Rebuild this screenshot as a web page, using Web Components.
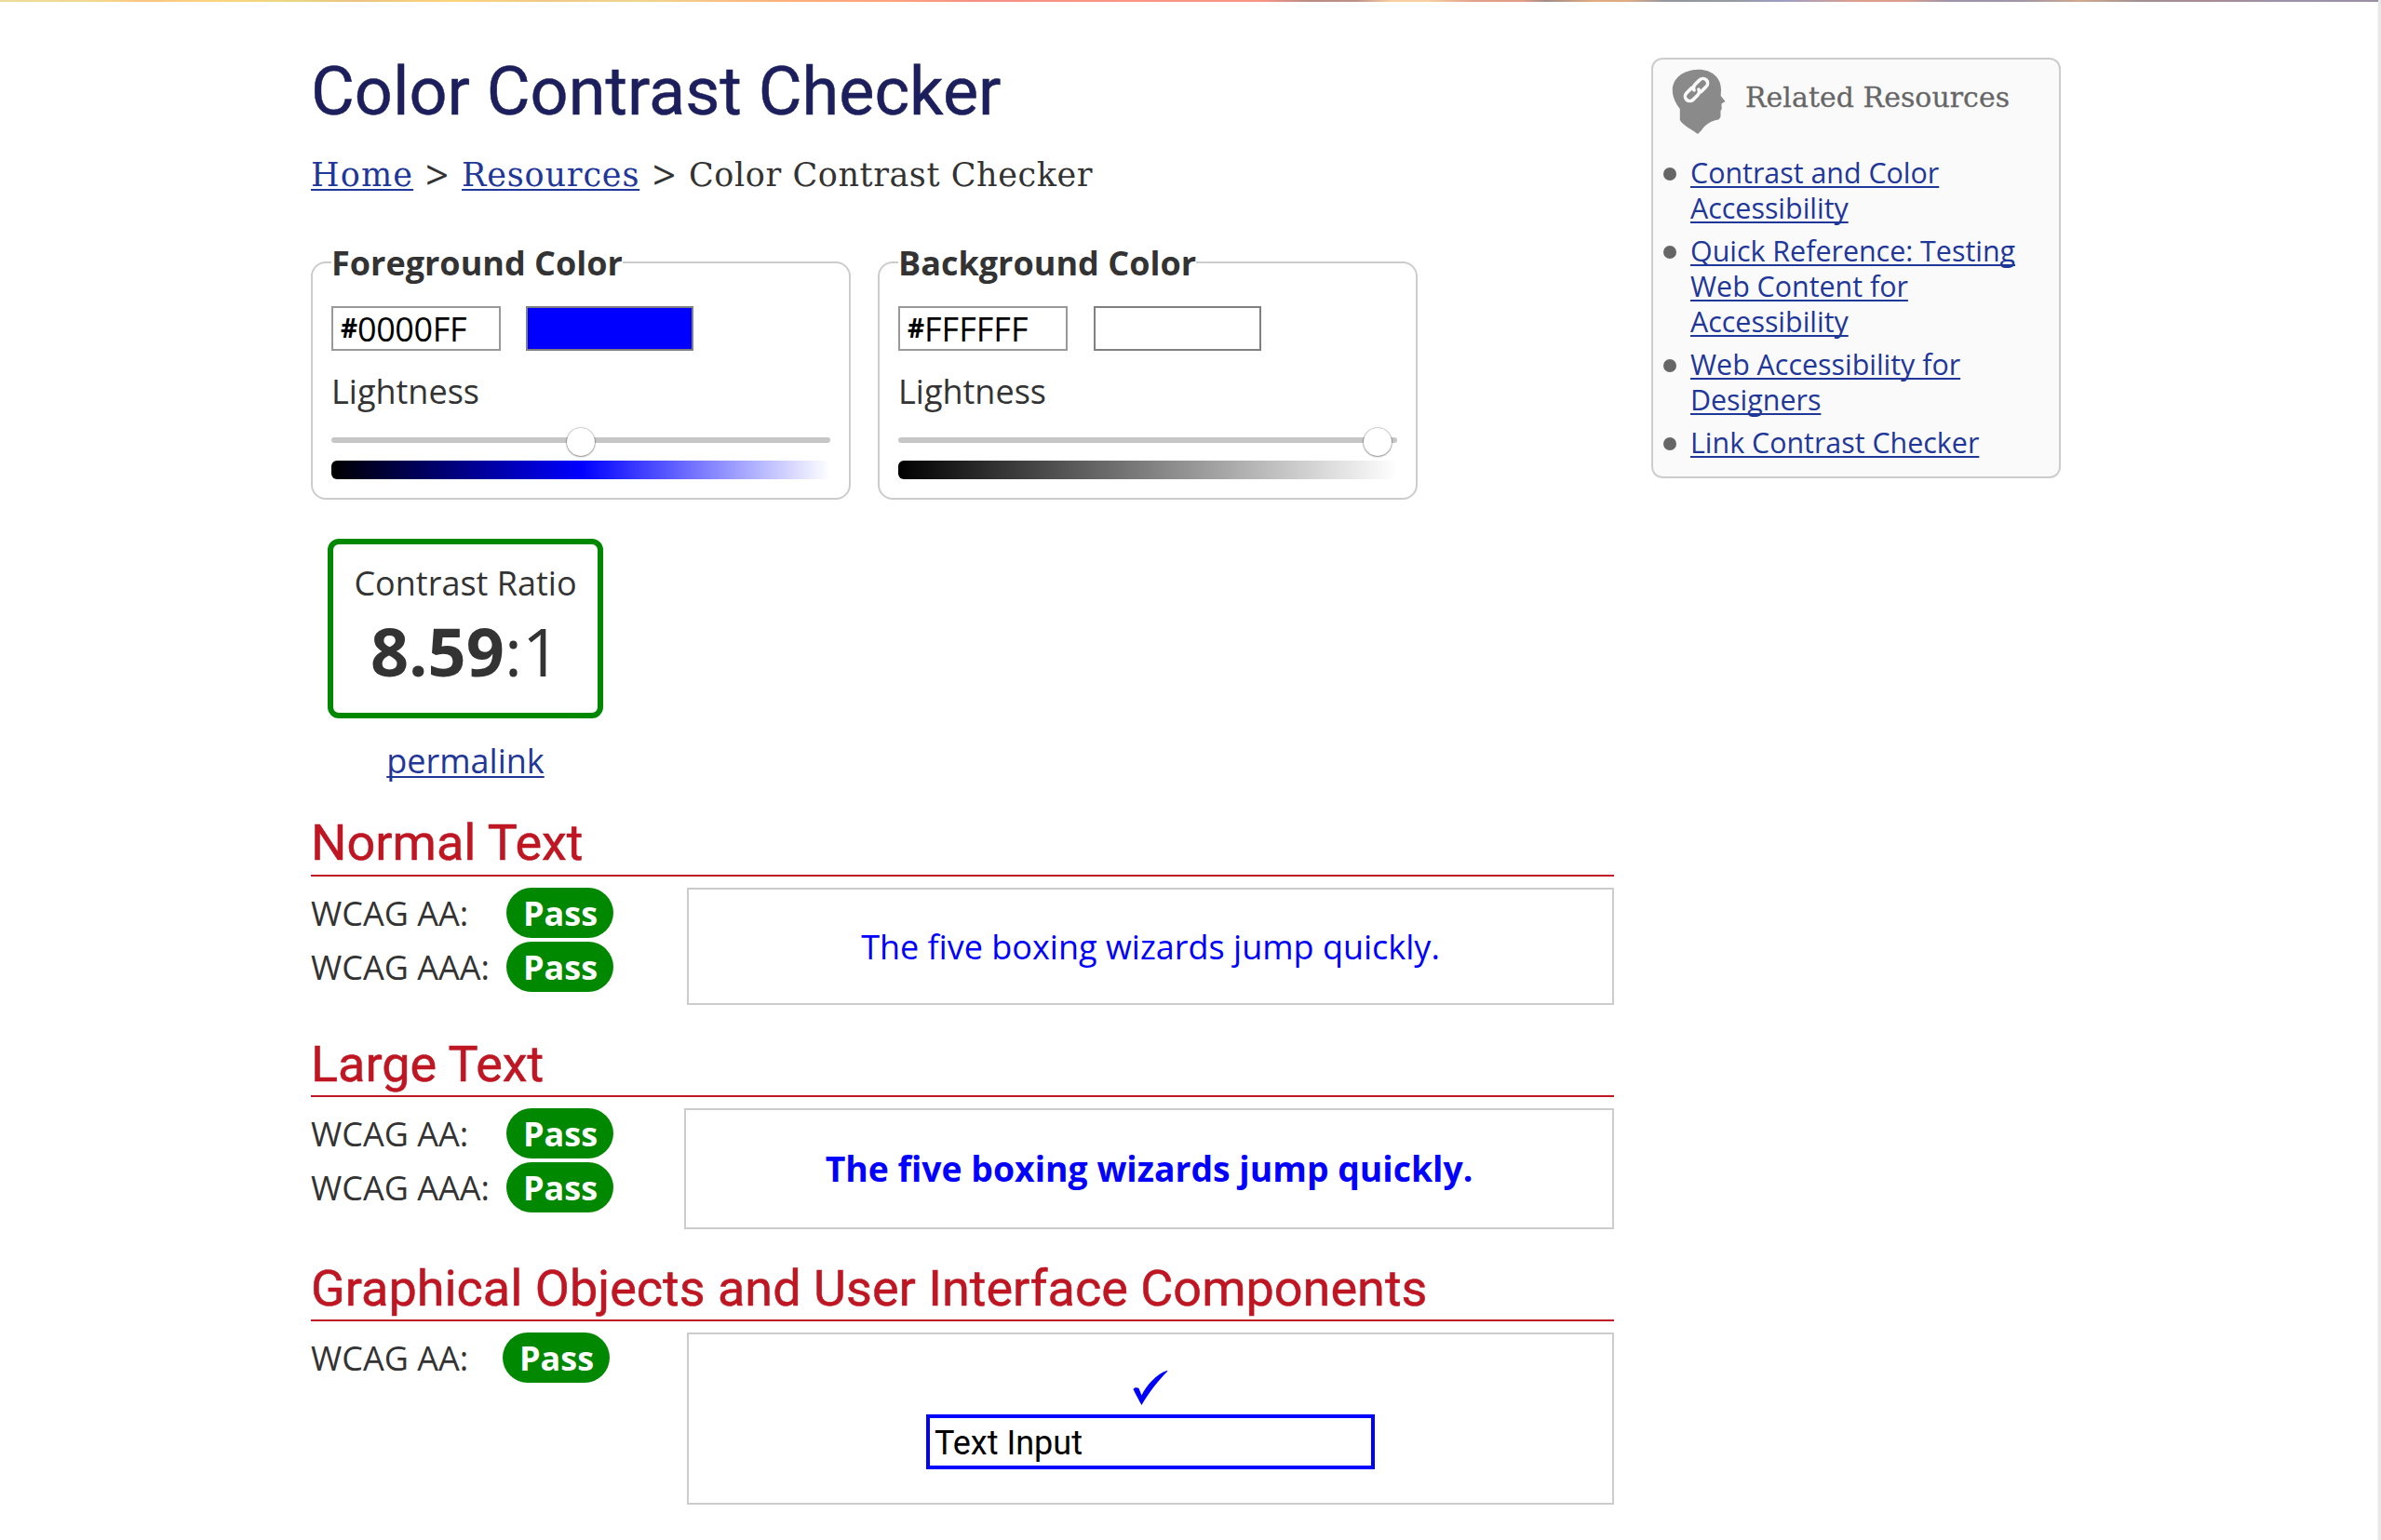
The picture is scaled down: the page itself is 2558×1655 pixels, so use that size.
<!DOCTYPE html>
<html lang="en"><head><meta charset="utf-8"><title>Color Contrast Checker</title>
<style>
html,body{margin:0;padding:0;background:#fff}
body{width:2558px;height:1655px;overflow:hidden;font:36px/58px "Open Sans",sans-serif;color:#333}
</style></head><body>
<checker-page></checker-page>
<script>
const define=(name,html)=>customElements.define(name,class extends HTMLElement{
  constructor(){super();this.attachShadow({mode:'open'})}
  connectedCallback(){this.shadowRoot.innerHTML=typeof html==='function'?html(this):html}
});

define('photo-strip',`<style>:host{display:block;height:2px;background:linear-gradient(90deg,#eedb9b 0,#f3d98f 4%,#fdc583 6%,#fdd57c 9%,#ead580 12.5%,#ebc382 15%,#fdd57a 19%,#f0c888 23%,#f0d68c 27%,#feb07a 33%,#fd9f80 38%,#f49084 41%,#fb9484 46%,#f99382 53%,#b98d86 55%,#bd9088 57%,#f8d0a0 58.5%,#f8cfa2 60%,#e0a08a 62%,#e39c85 64%,#a28c88 65%,#e0ac80 67%,#deaa84 68.5%,#93959f 70%,#959aa0 73%,#9d9dc8 75%,#dc9f8c 78%,#dc9f8c 80%,#9c93aa 82%,#a096a6 85%,#d0a88c 87.5%,#a19093 90%,#a88a92 93%,#9b93ab 96%,#9c90a4 99.7%)}</style>`);

define('text-link',`<style>:host{display:inline}a{color:#1f3799;text-decoration:underline;text-decoration-thickness:2px;text-underline-offset:3px;text-decoration-skip-ink:none}</style><a><slot></slot></a>`);

define('crumb-trail',`<style>
:host{display:flex;align-items:center;height:48px;font:35px/48px "DejaVu Serif",serif;margin-top:23px;white-space:nowrap}
.h{width:109px;letter-spacing:1.15px}.r{width:191px;letter-spacing:.84px}.c{letter-spacing:.57px}
.s{width:53px;text-align:center;font:44px/48px "Open Sans",sans-serif;height:48px;margin-top:-2px}
</style><text-link class="h">Home</text-link><span class="s">&gt;</span><text-link class="r">Resources</text-link><span class="s">&gt;</span><span class="c">Color Contrast Checker</span>`);

define('color-panel',el=>`<style>
:host{display:block;box-sizing:border-box;width:580px}
fieldset{margin:0;padding:0 20px;border:2px solid #ccc;border-radius:16px;min-width:0;box-sizing:border-box;height:282px}
legend{font-weight:700;padding:1px 0 0;height:53px;line-height:54px}
.row{display:flex;margin-top:20px}
.in{box-sizing:border-box;width:182px;height:48px;border:2px solid #999;padding-left:8px;line-height:46px;color:#000;white-space:nowrap;display:flex}
.in b{font-size:28px;width:18px;line-height:43px}
.in span{letter-spacing:${el.getAttribute('spacing')}px}
.sw{box-sizing:border-box;width:180px;height:48px;border:2px solid #808080;margin-left:var(--g,27px);background:${el.getAttribute('color')}}
.l{margin-top:15px;height:58px}
.track{height:6px;border-radius:3px;background:#c6c6c6;margin-top:20px;position:relative}
.thumb{position:absolute;width:30px;height:30px;border-radius:50%;background:#fff;box-shadow:0 0 1px 1px #00000030,0 1px 2px #00000050;top:-10px;left:${el.getAttribute('at')}px}
.ramp{height:20px;border-radius:6px;margin-top:19px;background:${el.getAttribute('ramp')}}
</style><fieldset><legend><slot></slot></legend>
<div class="row"><div class="in"><b>#</b><span>${el.getAttribute('hex')}</span></div><div class="sw"></div></div>
<div class="l">Lightness</div><div class="track"><div class="thumb"></div></div><div class="ramp"></div></fieldset>`);

define('contrast-ratio',`<style>
:host{display:block;width:296px;margin:42px 0 0 18px;text-align:center}
.b{box-sizing:border-box;height:193px;border:6px solid #080;border-radius:12px;padding-top:13px}
.t{line-height:58px}.v{font-size:72px;line-height:87px}.p{margin-top:17px}
</style><div class="b"><div class="t">Contrast Ratio</div><div class="v"><b>8.59</b>:1</div></div><div class="p"><text-link>permalink</text-link></div>`);

define('pass-badge',`<style>:host{display:block;box-sizing:border-box;width:115px;height:54px;border-radius:27px;background:#080;color:#fff;font-weight:700;line-height:56px;text-align:center;padding-left:1px}</style><slot></slot>`);

define('wcag-section',el=>`<style>
:host{display:block;height:var(--h)}
h2{margin:0;box-sizing:border-box;padding-top:var(--drop,1px);font:400 54px/64px Roboto,sans-serif;color:#be1622;-webkit-text-stroke:.5px #be1622;border-bottom:2px solid #be1622;height:69px;white-space:nowrap}
.body{display:flex;justify-content:space-between;align-items:flex-start}
.levels{padding-top:10px}.levels div{display:flex;align-items:center;height:58px}
.levels span{width:${el.getAttribute('key')}px;white-space:nowrap;line-height:56px;padding-top:2px}
.box{box-sizing:border-box;border:2px solid #ccc;margin-top:12px;width:${el.getAttribute('bw')}px;height:${el.getAttribute('bh')}px;display:flex;flex-direction:column;align-items:center;justify-content:center}
</style><h2>${el.getAttribute('heading')}</h2><div class="body"><div class="levels">${el.getAttribute('levels').split(',').map(l=>`<div><span>WCAG ${l}:</span><pass-badge>Pass</pass-badge></div>`).join('')}</div><div class="box"><slot></slot></div></div>`);

define('sample-text',`<style>:host{display:block;color:#00f;white-space:nowrap}</style><slot></slot>`);

define('sample-objects',`<style>:host{display:flex;flex-direction:column;align-items:center;align-self:stretch;height:100%}
svg{display:block;margin-top:38px;width:40px;height:38px}
.i{box-sizing:border-box;width:482px;height:59px;border:4px solid #00f;margin-top:10px;padding-left:5px;color:#000;font:36px/55px Roboto,sans-serif}
</style><svg viewBox="0 0 40 38"><path d="M1.500 21C2 19 6 18.500 7.500 20L10.500 27.500C16 16.500 26 5 37.500 1L38.500 1.500C29 10.500 17 26.500 10.500 38C8 33.500 4 26 1.500 21Z" fill="#00f"/></svg><div class="i">Text Input</div>`);

define('related-resources',`<style>
:host{display:block;box-sizing:border-box;width:440px;height:452px;border:2px solid #ccc;border-radius:12px;background:#fafafa;margin:60px 0 0 40px;color:#666;font-size:30.4px;line-height:38px}
header{display:flex;height:103px}
svg{display:block;width:58px;height:71px;margin:9.500px 0 0 20px}
h2{font:400 29.9px/40px "DejaVu Serif",serif;margin:21px 0 0 21px;white-space:nowrap;letter-spacing:.08px;-webkit-text-stroke:.3px #666}
ul{list-style:none;margin:0;padding:0 0 0 11px}
li{margin-bottom:8px;display:flex;white-space:nowrap}
li::before{content:"";width:14px;height:14px;border-radius:50%;background:#666;margin:13px 15px 0 0;flex:none}
</style><header><svg viewBox="0 0 58 71"><path d="M28 .8C42 .2 53 9 53 22L52.700 29L57.500 35L53.500 37.500L53.700 43L52.500 45V51.500L50.500 54.500C42 55.500 36 60 32 66L28 70C23 66 12 61 8.800 55V43C5 38 .8 31 .8 23C1 10 12 1.500 28 .8Z" fill="#8a8a8a"/>
<g transform="translate(26.500 22.500) rotate(-45)" fill="none" stroke="#fafafa" stroke-width="3.600" stroke-linecap="round"><path d="M-2 -5H-10A5 5 0 0 0 -10 5H-3Q1 5 2 1.500"/><path d="M2 5H10A5 5 0 0 0 10 -5H3Q-1 -5 -2 -1.500"/></g></svg><h2>Related Resources</h2></header>
<ul><li><text-link>Contrast and Color<br>Accessibility</text-link></li>
<li><text-link>Quick Reference: Testing<br>Web Content for<br>Accessibility</text-link></li>
<li><text-link>Web Accessibility for<br>Designers</text-link></li><li><text-link>Link Contrast Checker</text-link></li></ul>`);

define('checker-page',`<style>
:host{display:block;box-sizing:border-box;width:2558px;height:1655px;border-right:3px solid #e8e8e8;box-shadow:inset -1px 0 #f7f7f7}
.cols{display:flex;padding-left:334px}
main{width:1400px}
h1{margin:55px 0 0;font:400 72px/84px Roboto,sans-serif;color:#1c1f5c;-webkit-text-stroke:.5px #1c1f5c}
.panels{display:flex;gap:29px;margin-top:43px}
</style><photo-strip></photo-strip><div class="cols"><main>
<h1>Color Contrast Checker</h1><crumb-trail></crumb-trail>
<div class="panels"><color-panel color="#00f" hex="0000FF" spacing="-.4" at="253" ramp="linear-gradient(90deg,#000,#00f 50%,#fff)">Foreground Color</color-panel><color-panel style="--g:28px" color="#fff" hex="FFFFFF" spacing="0" at="500" ramp="linear-gradient(90deg,#000,#fff)">Background Color</color-panel></div>
<contrast-ratio></contrast-ratio>
<wcag-section style="--h:237px;margin-top:26px" heading="Normal Text" levels="AA,AAA" key="210" bw="996" bh="126"><sample-text style="padding-top:2px">The five boxing wizards jump quickly.</sample-text></wcag-section>
<wcag-section style="--h:241px;--drop:2px" heading="Large Text" levels="AA,AAA" key="210" bw="999" bh="130"><sample-text style="font-size:37.33px;font-weight:700">The five boxing wizards jump quickly.</sample-text></wcag-section>
<wcag-section style="--h:260px;--drop:2px" heading="Graphical Objects and User Interface Components" levels="AA" key="206" bw="996" bh="185"><sample-objects></sample-objects></wcag-section>
</main><related-resources></related-resources></div>`);
</script></body></html>
